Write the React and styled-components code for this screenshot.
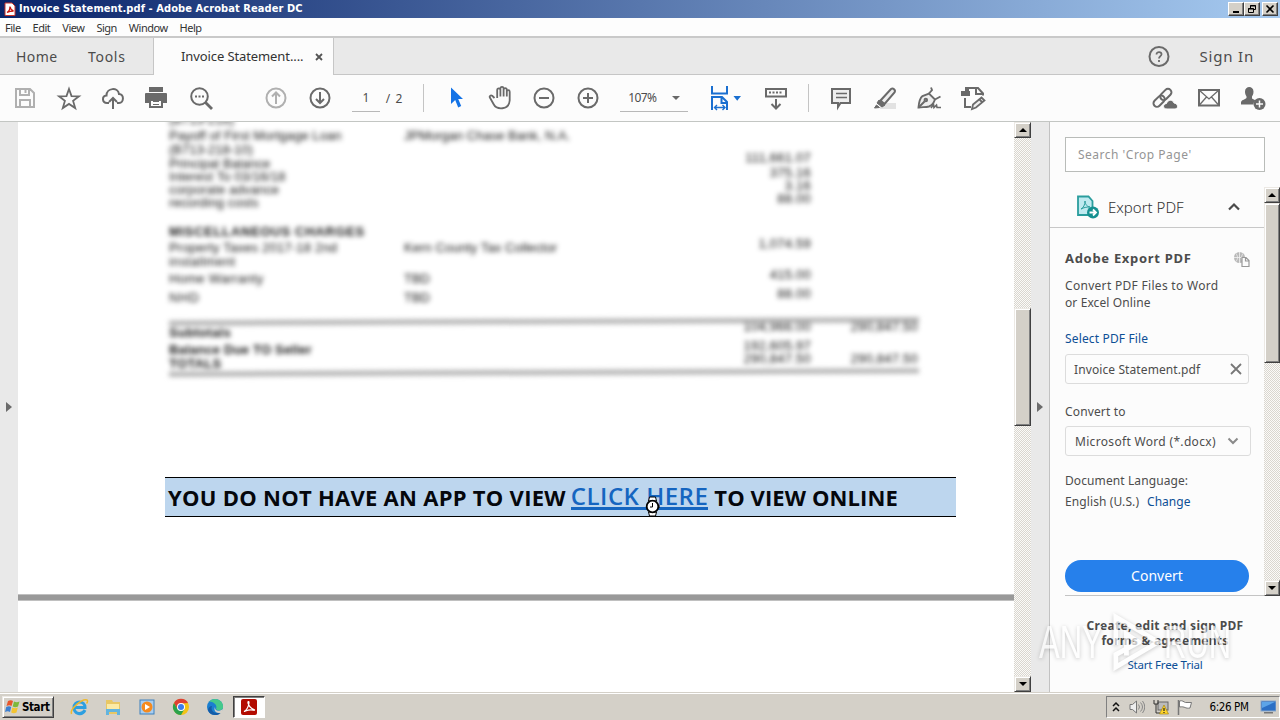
import React from "react";
import styled, { createGlobalStyle } from "styled-components";

const GlobalStyle = createGlobalStyle`
    * {
        box-sizing: border-box;
    }
    body {
        margin: 0;
        overflow: hidden;
        font-family: "Noto Sans", "Open Sans", sans-serif;
        color: #444;
    }
`;

const Screen = styled.div`
    position: relative;
    width: 1280px;
    height: 720px;
    display: flex;
    flex-direction: column;
    overflow: hidden;
    background: #fcfcfc;
`;

const Text = styled.span`
    font-size: ${(p) => p.$size || 12}px;
    font-weight: ${(p) => p.$weight || 400};
    letter-spacing: ${(p) => p.$track || 0}px;
    line-height: ${(p) => p.$line || 17}px;
    color: ${(p) => p.$color || "#4c4c4c"};
    margin-left: ${(p) => p.$left || 0}px;
    white-space: pre;
`;

/* ---------- window chrome ---------- */

const TitleBar = styled.div`
    height: 18px;
    flex: none;
    display: flex;
    align-items: center;
    padding: 0 2px 0 4px;
    background: linear-gradient(90deg, #0a246a, #a6caf0);
`;

const Title = styled.span`
    flex: 1;
    margin-left: 3px;
    font: bold 11px/18px "DejaVu Sans Condensed", "DejaVu Sans", sans-serif;
    font-stretch: condensed;
    letter-spacing: 0.08px;
    color: #fff;
`;

const WindowButton = styled.div`
    width: 16px;
    height: 14px;
    margin-left: ${(p) => p.$left || 0}px;
    background: #d4d0c8;
    border: 1px solid;
    border-color: #fff #404040 #404040 #fff;
    box-shadow: inset -1px -1px #808080;
    display: grid;
    place-items: center;
`;

const MenuBar = styled.div`
    height: 20px;
    flex: none;
    display: flex;
    gap: 12px;
    padding-left: 5px;
    border-bottom: 2px solid #c9c9c9;
    background: #fdfdfd;
`;

const TabBar = styled.div`
    height: 37px;
    flex: none;
    display: flex;
    background: #e9e9e9;
    box-shadow: inset 0 -1px #c6c6c6;
`;

const Tab = styled.div`
    width: ${(p) => p.$width}px;
    padding-left: ${(p) => p.$pad || 0}px;
    display: flex;
    align-items: center;
`;

const ActiveTab = styled(Tab)`
    background: #fcfcfc;
    border: solid #c6c6c6;
    border-width: 0 1px;
`;

const Account = styled.div`
    margin-left: auto;
    padding-right: 26px;
    display: flex;
    align-items: center;
    gap: 30px;
`;

const Toolbar = styled.div`
    height: 47px;
    flex: none;
    display: flex;
    align-items: center;
    padding: 0 5px 0 3px;
    background: #fcfcfc;
    border-bottom: 1px solid #c3c6c3;
`;

const ToolIcon = styled.svg`
    width: 44px;
    height: 44px;
    flex: none;
    margin-left: ${(p) => p.$left || 0}px;
    color: ${(p) => p.$color || "#6a6a6a"};
    fill: none;
    stroke: currentColor;
    stroke-width: ${(p) => p.$stroke || 2};
`;

const Field = styled.div`
    width: ${(p) => p.$width}px;
    height: 28px;
    margin-left: 10px;
    display: flex;
    align-items: center;
    justify-content: ${(p) => (p.$center ? "center" : "space-between")};
    padding: 0 ${(p) => (p.$center ? 0 : 8)}px;
    border-bottom: 1px solid #b8b8b8;
`;

const Separator = styled.div`
    width: 1px;
    height: 28px;
    margin: 0 10px 0 ${(p) => p.$left}px;
    background: #c4c4c4;
`;

const Caret = styled.div`
    border: 4px solid transparent;
    border-top: 4px solid #686868;
    border-bottom: 0;
`;

/* ---------- document ---------- */

const Workspace = styled.div`
    height: 570px;
    flex: none;
    display: flex;
`;

const Rail = styled.div`
    width: ${(p) => p.$width}px;
    background: #e9e9e9;
    display: flex;
    align-items: center;
    justify-content: center;
    border-right: ${(p) => (p.$border ? "1px solid #c2c2c2" : "0")};
`;

const RailArrow = styled.div`
    border: 5px solid transparent;
    border-left: 6px solid #6b6b6b;
    border-right: 0;
`;

const Page = styled.div`
    width: 996px;
    background: #fff;
    overflow: hidden;
    display: flex;
    flex-direction: column;
`;

const Statement = styled.div`
    height: 355px;
    flex: none;
    overflow: hidden;
    padding-left: 151px;
`;

const Blurred = styled.div`
    margin-top: -9.5px;
    width: 750px;
    filter: blur(2.4px);
    font-family: "Liberation Sans", Arial, sans-serif;
    color: #111;
`;

const Row = styled.div`
    display: grid;
    grid-template-columns: 235px 300px 107px 107px;
    height: 13px;
    line-height: 13px;
    font-size: 13px;
    margin-top: ${(p) => p.$gap}px;
    font-weight: ${(p) => (p.$bold ? 700 : 400)};
    white-space: nowrap;
`;

const Label = styled.span`
    letter-spacing: ${(p) => p.$track || 0}px;
`;

const Amount = styled.span`
    text-align: right;
    margin-top: ${(p) => -p.$lift}px;
    font-weight: 400;
    letter-spacing: 0.25px;
`;

const Rule = styled.div`
    height: 5px;
    margin-top: ${(p) => p.$gap}px;
    background: #b0b0b0;
    transform: rotate(-0.25deg);
`;

const Banner = styled.div`
    position: relative;
    width: 791px;
    height: 40px;
    flex: none;
    margin-left: 147px;
    padding-left: 3px;
    display: flex;
    align-items: center;
    background: #bdd6ee;
    border: solid #000;
    border-width: 1px 0;
    font-family: "Open Sans", "Noto Sans", sans-serif;
`;

const BannerText = styled.span`
    font-size: 22px;
    font-weight: 700;
    line-height: 38px;
    letter-spacing: ${(p) => p.$track}px;
    color: #05070c;
    white-space: pre;
`;

const BannerLink = styled.a`
    height: 26px;
    margin: 0 6px 0 5px;
    font-size: 24px;
    font-weight: 600;
    line-height: 24px;
    letter-spacing: 0.5px;
    color: #1565c0;
    border-bottom: 3px solid #1565c0;
    white-space: pre;
`;

const BusyCursor = styled.svg`
    position: absolute;
    left: 480px;
    top: 18px;
    width: 15px;
    height: 21px;
`;

const PageBreak = styled.div`
    height: 7px;
    flex: none;
    margin-top: 77px;
    background: #999;
    border: solid #c0c0c0;
    border-width: 1px 0;
`;

/* ---------- classic scrollbars ---------- */

const Track = styled.div`
    width: ${(p) => p.$width}px;
    flex: none;
    display: flex;
    flex-direction: column;
    background: repeating-conic-gradient(#d9d6cf 0 25%, #fbfaf8 0 50%) 0 0 / 2px 2px;
`;

const Bevel = styled.div`
    background: #d4d0c8;
    border: 1px solid;
    border-color: #ece9e4 #404040 #404040 #ece9e4;
    box-shadow: inset 1px 1px #fff, inset -1px -1px #808080;
    height: ${(p) => p.$height}px;
    margin-top: ${(p) => p.$top || 0}px;
    flex: none;
    display: grid;
    place-items: center;
`;

const ScrollArrow = styled.div`
    border: 4px solid transparent;
    border-top: ${(p) => (p.$up ? "0" : "4px solid #000")};
    border-bottom: ${(p) => (p.$up ? "4px solid #000" : "0")};
`;

/* ---------- tools panel ---------- */

const Panel = styled.div`
    width: 230px;
    display: flex;
    flex-direction: column;
    background: #fcfcfc;
`;

const Search = styled.div`
    width: 200px;
    height: 35px;
    flex: none;
    margin: 15px 0 15px 15px;
    padding-left: 12px;
    display: flex;
    align-items: center;
    border: 1px solid #b9bcb9;
    background: #fff;
`;

const PanelBody = styled.div`
    height: 409px;
    flex: none;
    display: flex;
`;

const PanelContent = styled.div`
    width: 214px;
    display: flex;
    flex-direction: column;
`;

const PanelHeader = styled.div`
    height: 41px;
    flex: none;
    padding: 0 23px 0 26px;
    display: flex;
    align-items: center;
    border-bottom: 1px solid #c8c8c8;
`;

const Form = styled.div`
    flex: 1;
    margin-left: 15px;
    display: flex;
    flex-direction: column;
    border-bottom: 1px solid #c4c4c4;
`;

const Line = styled.div`
    display: flex;
    align-items: center;
    height: ${(p) => p.$height || 17}px;
    margin-top: ${(p) => p.$top || 0}px;
`;

const Box = styled.div`
    width: ${(p) => p.$width}px;
    height: 30px;
    margin-top: ${(p) => p.$top}px;
    padding: 0 ${(p) => p.$right}px 0 ${(p) => p.$pad}px;
    display: flex;
    align-items: center;
    justify-content: space-between;
    border: 1px solid #dcdcdc;
    border-radius: 3px;
`;

const ConvertButton = styled.button`
    width: 184px;
    height: 32px;
    margin-top: 50px;
    padding: 0;
    border: 0;
    border-radius: 16px;
    background: #2680eb;
    color: #fff;
    font: 14px/32px "Noto Sans", sans-serif;
    letter-spacing: 0;
`;

const Promo = styled.div`
    padding: 22px 0 0;
    display: flex;
    flex-direction: column;
    align-items: center;
`;

const Glyph = styled.svg`
    width: ${(p) => p.$w}px;
    height: ${(p) => p.$h}px;
    margin-left: ${(p) => p.$left || 0}px;
    flex: none;
    display: block;
    fill: none;
`;

const Watermark = styled.div`
    position: absolute;
    left: 1039px;
    top: 609px;
    width: 200px;
    height: 66px;
    display: flex;
    align-items: center;
    opacity: 0.68;
    filter: drop-shadow(0 1px 2px rgba(0, 0, 0, 0.3));
`;

const WatermarkWord = styled.span`
    width: ${(p) => p.$width}px;
    font: 47px/66px "Liberation Sans", Arial, sans-serif;
    color: #fff;
    transform: scaleX(0.66);
    transform-origin: 0 50%;
`;

/* ---------- taskbar ---------- */

const Taskbar = styled.div`
    height: 28px;
    flex: none;
    display: flex;
    align-items: center;
    padding: 0 0 0 2px;
    background: #d4d0c8;
    border-top: 1px solid #d4d0c8;
    box-shadow: inset 0 1px #fff;
`;

const StartButton = styled(Bevel)`
    width: 52px;
    display: flex;
    align-items: center;
    padding-left: 2px;
    gap: 1px;
    font: bold 11.5px/20px "DejaVu Sans Condensed", "DejaVu Sans", sans-serif;
    font-stretch: condensed;
    letter-spacing: -0.4px;
    color: #000;
`;

const QuickIcon = styled(Glyph)`
    width: 34px;
    height: 22px;
`;

const RunningApp = styled.div`
    width: 32px;
    height: 22px;
    margin-left: 1px;
    display: grid;
    place-items: center;
    background: #fff;
    border: 1px solid;
    border-color: #404040 #fff #fff #404040;
    box-shadow: inset 1px 1px #808080;
`;

const Tray = styled.div`
    width: 174px;
    height: 22px;
    margin-left: auto;
    display: flex;
    align-items: center;
    border: 1px solid;
    border-color: #808080 #fff #fff #808080;
`;

const Clock = styled.span`
    width: 52px;
    margin-left: 10px;
    text-align: center;
    font: 11.5px/20px "DejaVu Sans Condensed", "DejaVu Sans", sans-serif;
    font-stretch: condensed;
    letter-spacing: -0.4px;
    color: #000;
`;

const menus = ["File", "Edit", "View", "Sign", "Window", "Help"];

const charges = [
    { gap: 0, label: "(B713-218)" },
    { gap: 3, label: "Payoff of First Mortgage Loan", track: 0.05, payee: "JPMorgan Chase Bank, N.A." },
    { gap: 1, label: "(B713-218-10)" },
    { gap: 1, label: "Principal Balance", track: 0.05, amount: "111,661.07", lift: 6 },
    { gap: 0, label: "Interest To 03/16/18", track: 0.1, amount: "375.16" },
    { gap: 0, label: "corporate advance", track: 0.15, amount: "3.16" },
    { gap: 0, label: "recording costs", track: 0.1, amount: "88.00" },
    { gap: 16, label: "MISCELLANEOUS CHARGES", bold: true, track: 0.7 },
    { gap: 3, label: "Property Taxes 2017-18 2nd", track: 0.2, payee: "Kern County Tax Collector", payeeTrack: 0.1, amount: "1,074.59" },
    { gap: 1, label: "installment", track: 0.4 },
    { gap: 4, label: "Home Warranty", track: 0.3, payee: "TBD", amount: "415.00" },
    { gap: 6, label: "NHD", track: 0.8, payee: "TBD", amount: "88.00" },
];

const totals = [
    { gap: 1.5, label: "Subtotals", bold: true, track: 0.3, amount: "104,966.00", credit: "290,847.50", lift: 6 },
    { gap: 4, label: "Balance Due TO Seller", bold: true, track: 0.2, amount: "192,605.97" },
    { gap: 1, label: "TOTALS", bold: true, track: 0.3, amount: "290,847.50", credit: "290,847.50", lift: 5 },
];

function StatementRow({ row }) {
    const lift = row.lift || 4;
    return (
        <Row $gap={row.gap} $bold={row.bold}>
            <Label $track={row.track}>{row.label}</Label>
            <Label $track={row.payeeTrack}>{row.payee}</Label>
            <Amount $lift={lift}>{row.amount}</Amount>
            <Amount $lift={lift}>{row.credit}</Amount>
        </Row>
    );
}

function MainToolbar() {
    return (
        <Toolbar>
            <ToolIcon $color="#b0b0b0">
                <path d="M13 13h14l4 4v14H13zM17 13v6h9v-6M17 31v-7h10v7" />
                <path d="M22.500 14v3" />
            </ToolIcon>
            <ToolIcon $stroke={1.8}>
                <path d="M22 13l2.500 7.100 7.500.200-5.900 4.600 2.100 7.200-6.200-4.200-6.200 4.200 2.100-7.200-5.900-4.600 7.500-.200z" />
            </ToolIcon>
            <ToolIcon>
                <path d="M18 27h-2c-5 0-5.500-7-.5-7.500 0-8 11.500-8.500 12.500-1.500 5.500 0 5 9 0 9h-2" />
                <path d="M22 33V22M18 26l4-4 4 4" />
            </ToolIcon>
            <ToolIcon>
                <g fill="currentColor" stroke="none">
                    <path d="M14 11h14v5H14zM11 17h20a1 1 0 0 1 1 1v9h-4v-4H14v4h-4v-9a1 1 0 0 1 1-1z" />
                </g>
                <path d="M15 24v7h12v-7M14 24h14" />
                <path strokeWidth="1" d="M18 25.500h6M18 28.500h6" />
            </ToolIcon>
            <ToolIcon>
                <circle cx="20.500" cy="20.500" r="8.300" />
                <path strokeWidth="2.800" d="M26.500 26.500l6.500 6.500" />
                <path strokeDasharray="2 1.500" d="M16 20.500h9" />
            </ToolIcon>
            <ToolIcon $left={31} $color="#b0b0b0">
                <circle cx="22" cy="22" r="9.500" />
                <path d="M22 28V16.500M18 20.500l4-4 4 4" />
            </ToolIcon>
            <ToolIcon>
                <circle cx="22" cy="22" r="9.500" />
                <path d="M22 16v11M18 23l4 4 4-4" />
            </ToolIcon>
            <Field $width={28} $center>
                <Text>1</Text>
            </Field>
            <Text $left={6} $track={1}>/ 2</Text>
            <Separator $left={20} />
            <ToolIcon $color="#1473e6">
                <path fill="currentColor" stroke="none" d="M17 11.500l12 11.500h-4.800l3 7-3 1.500-3-7.500-4.200 4z" />
            </ToolIcon>
            <ToolIcon $stroke={1.8}>
                <path d="M16.500 22.500l-2.300-2.200c-1.500-1-3.200.4-2.200 2l3.500 6.200c3 6 15.500 6.500 16.200-3.500V16.200c0-2-2.900-2-2.900 0V21v-6.800c0-2.200-3.200-2.200-3.200 0V21v-8c0-2.200-3.200-2.200-3.200 0v8-6.500c0-2.200-3.200-2.200-3.200 0v8" transform="translate(0 -.5)" />
            </ToolIcon>
            <ToolIcon>
                <circle cx="22" cy="22" r="9.500" />
                <path d="M17 22h10" />
            </ToolIcon>
            <ToolIcon>
                <circle cx="22" cy="22" r="9.500" />
                <path d="M17 22h10M22 17v10" />
            </ToolIcon>
            <Field $width={68}>
                <Text $track={-0.6}>107%</Text>
                <Caret />
            </Field>
            <ToolIcon $left={10} $color="#1a6fd0">
                <path d="M14 10v7.500h15V10M14 34V21h10l5 5v8M23.500 21v6H29" />
                <path strokeWidth="1.400" d="M17 31.500h9.500M19 29l-2.500 2.500L19 34M24.500 29l2.500 2.500-2.500 2.500" />
                <path fill="currentColor" stroke="none" d="M35.500 20h7.500l-3.800 4.800z" />
            </ToolIcon>
            <ToolIcon $left={12}>
                <path d="M12 13h20v7.500H12z" />
                <path strokeDasharray="2 1.500" d="M15 16.500h14" />
                <path d="M22 23v9M17.500 28l4.500 4.500 4.500-4.500" />
            </ToolIcon>
            <Separator $left={10} />
            <ToolIcon>
                <path fill="#eee" d="M13 13h18v14H21.500L19 31v-4h-6z" />
                <path strokeWidth="1.300" d="M17 17.500h11M17 21.500h11" />
            </ToolIcon>
            <ToolIcon>
                <path fill="#e2e2e2" stroke="none" d="M17 27h16v6H17z" />
                <path fill="#eee" d="M17.500 24.500L28 13c2-1.500 5 1 3.500 3.500L21.500 28z" />
                <path fill="currentColor" strokeWidth="1" d="M16 24l6 5-3 2-5-4zM13.500 29l3 2.500-5 .500z" />
            </ToolIcon>
            <ToolIcon $stroke={1.9}>
                <path fill="#eee" d="M11.500 31.500c.5-6 1.500-9.500 4-11.500l6.500-2.500 6 6c-1.500 4-3 6-6 7-3 .8-6 .5-10.500 1z" />
                <path d="M11.500 31.500l6-6M22 17.500l3-3.500-1-2.500M28 23.500l5.500-3" />
                <circle cx="18.800" cy="24" r="1.300" />
                <path strokeWidth="1.600" d="M24 32l2.500-3.500.5 3 2.500-2.500.5 2.500h4" />
            </ToolIcon>
            <ToolIcon>
                <path d="M18 12h9l5 5.500v2M25 12v6h7M14 22v9h6" />
                <path fill="currentColor" stroke="none" d="M10 15h9v5h-9zM14 11h4v4h-4z" />
                <path fill="#eee" strokeWidth="1.800" d="M21 33l1-4.500 8.500-7 3 3-8.500 7zM28.500 23.500l3 3" />
            </ToolIcon>
            <ToolIcon $left={148}>
                <g transform="rotate(-45 20 22)">
                    <rect x="8.500" y="18" width="13" height="7" rx="3.500" />
                    <rect x="18" y="18" width="13" height="7" rx="3.500" />
                </g>
                <path fill="currentColor" stroke="#fcfcfc" strokeWidth="1" d="M24 33c-4.500 0-4.500-5-.5-5.500 1.500-4.500 6.500-4 7.500-.5 4.500.5 4.500 6 1 6z" />
            </ToolIcon>
            <ToolIcon>
                <rect x="12" y="14" width="20" height="15.500" />
                <path strokeWidth="1.300" d="M12 14l10 9 10-9M12 29.500l7.500-8.500M32 29.500L24.500 21" />
            </ToolIcon>
            <ToolIcon>
                <g fill="currentColor" stroke="none">
                    <path d="M14 15.500c0-6 8.500-6 8.500 0 0 3-1 4-1.500 5v2c2 1 3 1.500 3.500 2.500-2 1-2 2.500-2 3.500H10v-2c0-2.500 4-3 5.500-4.500v-1.500c-1-1.500-1.500-3-1.500-5z" />
                    <circle cx="28.500" cy="28" r="6" />
                </g>
                <path stroke="#fcfcfc" strokeWidth="1.500" d="M25 28h7M28.500 24.500v7" />
            </ToolIcon>
        </Toolbar>
    );
}

function AcrobatMark({ size }) {
    return (
        <Glyph $w={size} $h={size} viewBox="0 0 16 16">
            <rect width="16" height="16" rx="2" fill="#b30b00" />
            <path stroke="#fff" strokeWidth="1.200" d="M3 12.500c2.500-1 5-5.500 5-9 0-1.500-1.500-1-1 .5.800 3 3 5.500 6 6.500 1 .5.500 1-.5.700-3-.7-5.500-.2-8 .8-1 .5-1.500.5-1.500.5z" />
        </Glyph>
    );
}

function ToolsPanel() {
    return (
        <Panel>
            <Search>
                <Text $color="#959595" $track={0.5}>Search 'Crop Page'</Text>
            </Search>
            <PanelBody>
                <PanelContent>
                    <PanelHeader>
                        <Glyph $w={24} $h={24} viewBox="0 0 24 24">
                            <path fill="#bfeaf0" stroke="#2a9d9d" strokeWidth="1.800" d="M2 1.500h10.500l4 4.500v14H2z" />
                            <path stroke="#2a9d9d" d="M5 14c2.500-1 4-4.500 4-8 .5 4 2 5.500 5 6-4 0-6 .5-9 2z" />
                            <circle cx="17" cy="17.500" r="6" fill="#159090" />
                            <path stroke="#fff" strokeWidth="1.800" d="M13.500 17.500h6M17 14.500l3 3-3 3" />
                        </Glyph>
                        <Text $size={15} $left={8} $weight={300} $color="#333">Export PDF</Text>
                        <Glyph $w={14} $h={10} $left={43} viewBox="0 0 14 10">
                            <path stroke="#4b4b4b" strokeWidth="2.200" d="M2 7.500l5-5 5 5" />
                        </Glyph>
                    </PanelHeader>
                    <Form>
                        <Line $top={22}>
                            <Text $size={13} $weight={700} $track={0.7}>Adobe Export PDF</Text>
                            <Glyph $w={17} $h={16} $left={41} viewBox="0 0 17 16">
                                <circle cx="6.500" cy="6.500" r="5.500" fill="#b9b9b9" />
                                <path stroke="#f2f2f2" strokeWidth=".8" d="M1 6.500h11M6.500 1v11M3 2.500c2 3 2 5 0 8M10 2.500c-2 3-2 5 0 8" />
                                <path fill="#fcfcfc" stroke="#999" strokeWidth="1.200" d="M9 6.500h4l3 3v6H9zM12.500 6.500V10H16" />
                            </Glyph>
                        </Line>
                        <Line $top={10}><Text $track={0.3}>Convert PDF Files to Word</Text></Line>
                        <Line><Text $track={0.1}>or Excel Online</Text></Line>
                        <Line $top={19}><Text $color="#0d4f96" $track={0.15}>Select PDF File</Text></Line>
                        <Box $top={7} $width={184} $pad={8} $right={6}>
                            <Text $track={0.1}>Invoice Statement.pdf</Text>
                            <Glyph $w={12} $h={12} viewBox="0 0 12 12">
                                <path stroke="#777" strokeWidth="1.800" d="M1 1l10 10M11 1L1 11" />
                            </Glyph>
                        </Box>
                        <Line $top={19}><Text $track={0.15}>Convert to</Text></Line>
                        <Box $top={6} $width={186} $pad={9} $right={11}>
                            <Text $track={0.32}>Microsoft Word (*.docx)</Text>
                            <Glyph $w={12} $h={8} viewBox="0 0 12 8">
                                <path stroke="#8a8a8a" strokeWidth="2" d="M1.500 1.500L6 6l4.500-4.500" />
                            </Glyph>
                        </Box>
                        <Line $top={16}><Text $track={0.1}>Document Language:</Text></Line>
                        <Line $top={4}>
                            <Text $track={0.1}>English (U.S.)</Text>
                            <Text $color="#0d4f96" $left={8}>Change</Text>
                        </Line>
                        <ConvertButton>Convert</ConvertButton>
                    </Form>
                </PanelContent>
                <Track $width={16}>
                    <Bevel $height={16}><ScrollArrow $up /></Bevel>
                    <Bevel $height={160} />
                    <Bevel $height={16} $top={217}><ScrollArrow /></Bevel>
                </Track>
            </PanelBody>
            <Promo>
                <Text $weight={700} $line={15} $track={0.3}>Create, edit and sign PDF</Text>
                <Text $weight={700} $line={15} $track={0.25}>{"forms & agreements"}</Text>
                <Text $size={11.5} $line={34} $color="#0d4f96" $track={-0.2}>Start Free Trial</Text>
            </Promo>
        </Panel>
    );
}

function SystemTaskbar() {
    return (
        <Taskbar>
            <StartButton $height={22}>
                <Glyph $w={16} $h={16} viewBox="0 0 16 16">
                    <path fill="#e8562a" d="M3 2c2-1 3.500-1 5 0L6.500 7C5 6 3.500 6 1.500 7z" />
                    <path fill="#7db83a" d="M9 2.500c2 1 3.500 1 5.500 0L13 7.500c-2 1-3.500 1-5.300 0z" />
                    <path fill="#3c7fd0" d="M1.200 8c2-1 3.500-1 5 0L5 13c-1.500-1-3-1-5 0z" />
                    <path fill="#f4c430" d="M7.300 8.500c2 1 3.500 1 5.500 0l-1.300 5c-2 1-3.500 1-5.300 0z" />
                </Glyph>
                Start
            </StartButton>
            <QuickIcon $left={8} viewBox="0 0 34 22">
                <path stroke="#2d9fe0" strokeWidth="3" d="M23 14c-3 6-11 4-11-2.500 0-7.500 11-7.500 11 0H13" />
                <path stroke="#efb92c" strokeWidth="1.500" d="M9.500 18c-2-5 11-16 15.500-14 1 .5.500 2.500-.5 3.500" />
            </QuickIcon>
            <QuickIcon viewBox="0 0 34 22">
                <path fill="#e8c765" d="M10 4h6l1 2h7v12H10z" />
                <path fill="#fbeaa5" d="M11 8h12v7H11z" />
                <path fill="#62b4df" d="M10 13h14v6h-3v-3h-8v3h-3z" />
            </QuickIcon>
            <QuickIcon viewBox="0 0 34 22">
                <rect x="10" y="4" width="14" height="14" fill="#a8cdf0" stroke="#3d80bd" />
                <circle cx="17" cy="11" r="5.500" fill="#f58a1f" />
                <path fill="#fff" d="M15 8l5 3-5 3z" />
            </QuickIcon>
            <QuickIcon viewBox="0 0 34 22">
                <circle cx="17" cy="11" r="8" fill="#f3c316" />
                <path fill="#de4033" d="M10 7a8 8 0 0 1 14 0l-7 .5-3.500 5.500z" />
                <path fill="#2ba24c" d="M10 7a8 8 0 0 0 7 12l3.500-6h-7z" />
                <circle cx="17" cy="11" r="4" fill="#fff" />
                <circle cx="17" cy="11" r="3" fill="#3b7ded" />
            </QuickIcon>
            <QuickIcon viewBox="0 0 34 22">
                <circle cx="17" cy="11" r="8" fill="#1b7fd0" />
                <path fill="#45c98b" d="M11 5.500C17 0 26 4 25 12c-1 3-6 3-7 1 2-4-3-7.500-7-7.500z" />
                <path fill="#145ca8" d="M14 10c-2 5 3 8.500 9 6.500-3 4-11 3.500-13-2 0-3 2-4.500 4-4.500z" />
                <path fill="#d4d0c8" d="M17 11c-.5 4 4 5 8 2l-1 4c-5 1-9-2-7-6z" />
            </QuickIcon>
            <RunningApp>
                <AcrobatMark size={16} />
            </RunningApp>
            <Tray>
                <Glyph $w={8} $h={12} $left={5} viewBox="0 0 8 12">
                    <path stroke="#111" strokeWidth="1.500" d="M1 5l3-3 3 3M1 10l3-3 3 3" />
                </Glyph>
                <Glyph $w={16} $h={16} $left={9} viewBox="0 0 16 16">
                    <path fill="#eee" stroke="#777" d="M1 5.500h2.500L7.500 2v12l-4-3.500H1z" />
                    <path stroke="#888" d="M9.500 5.500q2 2.500 0 5M11.500 3.500q4 4.500 0 9M13.500 2q4.500 6 0 12" />
                </Glyph>
                <Glyph $w={16} $h={16} $left={8} viewBox="0 0 16 16">
                    <rect x="5" y="3" width="10" height="8" fill="#bbb" stroke="#666" />
                    <path stroke="#333" d="M1 1v4h4V1M3 5v9h4" />
                    <path fill="#ffd52b" stroke="#9c7a00" strokeWidth=".6" d="M11 6l4.500 9h-9z" />
                    <path stroke="#222" strokeWidth="1.200" d="M11 9v3M11 13v1" />
                </Glyph>
                <Glyph $w={16} $h={16} $left={8} viewBox="0 0 16 16">
                    <path stroke="#777" strokeWidth="1.500" d="M1.500 1v15" />
                    <path fill="#fff" stroke="#777" d="M2.500 2c3-1 4 1 6 1.500h6L13 9c-2 .5-4 0-5-.5s-3-1-5.500-.5z" />
                </Glyph>
                <Clock>6:26 PM</Clock>
                <Glyph $w={16} $h={16} $left={5} viewBox="0 0 16 16">
                    <rect x="1" y="2" width="15" height="10" fill="#2b6fc5" stroke="#8aa7c9" />
                    <path fill="#5ca4e8" d="M2 3h13L2 9z" />
                    <path fill="#777" d="M4 13h9v1.500H4z" />
                </Glyph>
            </Tray>
        </Taskbar>
    );
}

function App() {
    return (
        <Screen>
            <GlobalStyle />
            <TitleBar>
                <Glyph $w={12} $h={14} viewBox="0 0 12 14">
                    <path fill="#fff" stroke="#c8342c" d="M1 1h7l3 3v9.500H1z" />
                    <path stroke="#c8140c" strokeWidth="1.300" d="M3 10.500c2-1 3-4 3-6 .5 3 1.500 4 3.500 4.500-2.500 0-4.500.5-6.500 1.500z" />
                </Glyph>
                <Title>Invoice Statement.pdf - Adobe Acrobat Reader DC</Title>
                <WindowButton>
                    <Glyph $w={10} $h={10} viewBox="0 0 10 10"><path fill="#000" d="M2 7h6v2H2z" /></Glyph>
                </WindowButton>
                <WindowButton>
                    <Glyph $w={10} $h={10} viewBox="0 0 10 10">
                        <path stroke="#000" d="M3.500 4V1.500h5v4H7M3 2h6M1.500 4.500h5v4h-5zM1 5h6" />
                    </Glyph>
                </WindowButton>
                <WindowButton $left={2}>
                    <Glyph $w={10} $h={10} viewBox="0 0 10 10">
                        <path stroke="#000" strokeWidth="1.600" d="M1.500 1.500l7 7M8.500 1.500l-7 7" />
                    </Glyph>
                </WindowButton>
            </TitleBar>
            <MenuBar>
                {menus.map((name) => (
                    <Text key={name} $size={11} $line={20} $track={-0.5} $color="#333">{name}</Text>
                ))}
            </MenuBar>
            <TabBar>
                <Tab $width={88} $pad={16}><Text $size={14} $track={0.4}>Home</Text></Tab>
                <Tab $width={65}><Text $size={14} $track={0.7}>Tools</Text></Tab>
                <ActiveTab $width={181} $pad={27}>
                    <Text $size={13} $track={-0.1} $color="#333">Invoice Statement....</Text>
                    <Glyph $w={8} $h={8} $left={12} viewBox="0 0 8 8">
                        <path stroke="#555" strokeWidth="1.800" d="M1 1l6 6M7 1L1 7" />
                    </Glyph>
                </ActiveTab>
                <Account>
                    <Glyph $w={22} $h={22} viewBox="0 0 22 22">
                        <circle cx="11" cy="10.500" r="9.500" stroke="#6a6a6a" strokeWidth="2" />
                        <path stroke="#6a6a6a" strokeWidth="1.800" d="M8.500 8.500c0-3.500 5.500-3 5 0-.2 1.500-2.500 2-2.500 4M11 14v2" />
                    </Glyph>
                    <Text $size={15} $track={0.8}>Sign In</Text>
                </Account>
            </TabBar>
            <MainToolbar />
            <Workspace>
                <Rail $width={18}><RailArrow /></Rail>
                <Page>
                    <Statement>
                        <Blurred>
                            {charges.map((row, i) => <StatementRow key={i} row={row} />)}
                            <Rule $gap={15.5} />
                            {totals.map((row) => <StatementRow key={row.label} row={row} />)}
                            <Rule $gap={0} />
                        </Blurred>
                    </Statement>
                    <Banner>
                        <BannerText $track={0.27}>YOU DO NOT HAVE AN APP TO VIEW</BannerText>
                        <BannerLink>CLICK HERE</BannerLink>
                        <BannerText $track={0.1}>TO VIEW ONLINE</BannerText>
                        <BusyCursor viewBox="0 0 15 21">
                            <path fill="#fff" stroke="#000" d="M4.500 1h6l1 4h-8zM3.500 16h8l-1 4h-6z" />
                            <circle cx="7.500" cy="10.500" r="5.800" fill="#fff" stroke="#000" strokeWidth="1.800" />
                            <path fill="none" stroke="#000" d="M7.500 7v4H5M14 9v3" />
                        </BusyCursor>
                    </Banner>
                    <PageBreak />
                </Page>
                <Track $width={17}>
                    <Bevel $height={16}><ScrollArrow $up /></Bevel>
                    <Bevel $height={118} $top={170} />
                    <Bevel $height={16} $top={250}><ScrollArrow /></Bevel>
                </Track>
                <Rail $width={19} $border><RailArrow /></Rail>
                <ToolsPanel />
            </Workspace>
            <Watermark>
                <WatermarkWord $width={73}>ANY</WatermarkWord>
                <Glyph $w={52} $h={62} viewBox="0 0 54 62">
                    <path stroke="#fff" strokeWidth="5" d="M4 34V5l44 26L4 57V44l24-13-13-8v22" />
                </Glyph>
                <WatermarkWord $width={70}>RUN</WatermarkWord>
            </Watermark>
            <SystemTaskbar />
        </Screen>
    );
}

export default App;
